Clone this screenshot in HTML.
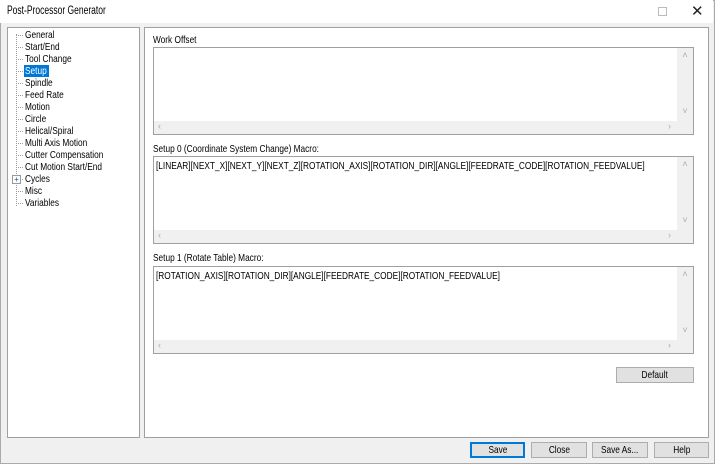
<!DOCTYPE html>
<html><head><style>
*{margin:0;padding:0;box-sizing:border-box}
body{width:715px;height:464px;background:#f0f0f0;font-family:"Liberation Sans",sans-serif;font-size:10.5px;color:#000;position:relative;overflow:hidden}
.s{display:inline-block;transform:scaleX(.79);transform-origin:0 0;white-space:nowrap}
.c{display:inline-block;transform:scaleX(.79);transform-origin:50% 0;white-space:nowrap}
.win{position:absolute;left:0;top:0;width:715px;height:464px;border:1px solid #aaa}
.title{position:absolute;left:0;top:0;width:713px;height:23px;background:#fff}
.title span.t{position:absolute;left:7px;top:5px;font-size:11.5px;transform:scaleX(.74);transform-origin:0 0;white-space:nowrap}
.a{position:absolute}
.panel{background:#fff;border:1px solid #a0a0a0}
.tree div{position:absolute;left:17px;height:12px;line-height:12px;white-space:nowrap}
.tree .h{position:absolute;left:8px;width:7px;border-top:1px dotted #999}
.box{background:#fff;border:1px solid #a0a0a0;overflow:hidden}
.vs{position:absolute;right:0;top:0;width:16px;background:#f0f0f0;color:#aaa;font-size:9px;text-align:center}
.hs{position:absolute;left:0;bottom:0;height:13px;background:#f0f0f0;color:#aaa;font-size:9px}
.btn{position:absolute;background:#e1e1e1;border:1px solid #adadad;text-align:center;line-height:14px;height:16px;overflow:hidden}
.lbl{position:absolute;white-space:nowrap}
</style></head><body>
<div class="win"></div>
<div class="title"><span class="t">Post-Processor Generator</span>
<div class="a" style="left:658px;top:7px;width:9px;height:9px;border:1px solid #bbb"></div>
<div class="a" style="left:691px;top:2px;font-size:15px;color:#222">✕</div></div>
<div class="a panel tree" style="left:7px;top:27px;width:133px;height:411px">
<div class="a" style="left:8px;top:6px;width:0;height:172px;border-left:1px dotted #999"></div>
<span class="h" style="top:7px"></span><div style="top:1px"><span class="s">General</span></div>
<span class="h" style="top:19px"></span><div style="top:13px"><span class="s">Start/End</span></div>
<span class="h" style="top:31px"></span><div style="top:25px"><span class="s">Tool Change</span></div>
<span class="h" style="top:43px"></span><div style="top:37px;left:16px;background:#0078d7;color:#fff;padding:0 1px;width:25px"><span class="s">Setup</span></div>
<span class="h" style="top:55px"></span><div style="top:49px"><span class="s">Spindle</span></div>
<span class="h" style="top:67px"></span><div style="top:61px"><span class="s">Feed Rate</span></div>
<span class="h" style="top:79px"></span><div style="top:73px"><span class="s">Motion</span></div>
<span class="h" style="top:91px"></span><div style="top:85px"><span class="s">Circle</span></div>
<span class="h" style="top:103px"></span><div style="top:97px"><span class="s">Helical/Spiral</span></div>
<span class="h" style="top:115px"></span><div style="top:109px"><span class="s">Multi Axis Motion</span></div>
<span class="h" style="top:127px"></span><div style="top:121px"><span class="s">Cutter Compensation</span></div>
<span class="h" style="top:139px"></span><div style="top:133px"><span class="s">Cut Motion Start/End</span></div>
<span class="h" style="top:151px"></span><div style="top:145px"><span class="s">Cycles</span></div>
<div class="a" style="left:4px;top:147px;width:9px;height:9px;border:1px solid #999;background:#fff;font-size:8px;line-height:7px;text-align:center;color:#1a4fa0">+</div>
<span class="h" style="top:163px"></span><div style="top:157px"><span class="s">Misc</span></div>
<span class="h" style="top:175px"></span><div style="top:169px"><span class="s">Variables</span></div>
</div>
<div class="a panel" style="left:144px;top:27px;width:565px;height:411px"></div>
<div class="lbl" style="left:153px;top:34px"><span class="s">Work Offset</span></div>
<div class="a box" style="left:153px;top:47px;width:541px;height:88px">
<div class="vs" style="height:74px"><div style="margin-top:2px">˄</div><div style="margin-top:46px">˅</div></div>
<div class="hs" style="width:539px"><span style="position:absolute;left:4px">‹</span><span style="position:absolute;right:22px">›</span></div></div>
<div class="lbl" style="left:153px;top:143px"><span class="s">Setup 0 (Coordinate System Change) Macro:</span></div>
<div class="a box" style="left:153px;top:156px;width:541px;height:88px">
<div style="position:absolute;left:2px;top:3px"><span class="s">[LINEAR][NEXT_X][NEXT_Y][NEXT_Z][ROTATION_AXIS][ROTATION_DIR][ANGLE][FEEDRATE_CODE][ROTATION_FEEDVALUE]</span></div>
<div class="vs" style="height:74px"><div style="margin-top:2px">˄</div><div style="margin-top:46px">˅</div></div>
<div class="hs" style="width:539px"><span style="position:absolute;left:4px">‹</span><span style="position:absolute;right:22px">›</span></div></div>
<div class="lbl" style="left:153px;top:252px"><span class="s">Setup 1 (Rotate Table) Macro:</span></div>
<div class="a box" style="left:153px;top:266px;width:541px;height:88px">
<div style="position:absolute;left:2px;top:3px"><span class="s">[ROTATION_AXIS][ROTATION_DIR][ANGLE][FEEDRATE_CODE][ROTATION_FEEDVALUE]</span></div>
<div class="vs" style="height:74px"><div style="margin-top:2px">˄</div><div style="margin-top:46px">˅</div></div>
<div class="hs" style="width:539px"><span style="position:absolute;left:4px">‹</span><span style="position:absolute;right:22px">›</span></div></div>
<div class="btn" style="left:616px;top:367px;width:78px"><span class="c">Default</span></div>
<div class="btn" style="left:470px;top:442px;width:55px;border:2px solid #0078d7;line-height:12px"><span class="c">Save</span></div>
<div class="btn" style="left:531px;top:442px;width:56px"><span class="c">Close</span></div>
<div class="btn" style="left:592px;top:442px;width:56px"><span class="c">Save As...</span></div>
<div class="btn" style="left:654px;top:442px;width:55px"><span class="c">Help</span></div>
</body></html>
